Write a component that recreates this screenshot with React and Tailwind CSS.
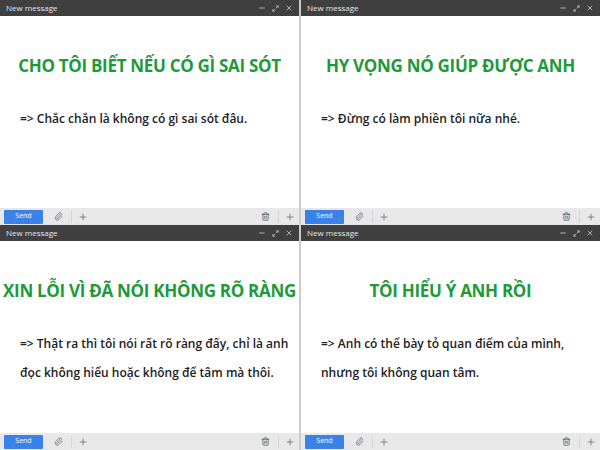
import { Paperclip, Plus, Trash2, Minus, Maximize2, X } from "lucide-react";

const panels = [
  { title: "CHO TÔI BIẾT NẾU CÓ GÌ SAI SÓT", text: "=> Chắc chắn là không có gì sai sót đâu." },
  { title: "HY VỌNG NÓ GIÚP ĐƯỢC ANH", text: "=> Đừng có làm phiền tôi nữa nhé." },
  { title: "XIN LỖI VÌ ĐÃ NÓI KHÔNG RÕ RÀNG", text: "=> Thật ra thì tôi nói rất rõ ràng đấy, chỉ là anh đọc không hiểu hoặc không để tâm mà thôi." },
  { title: "TÔI HIỂU Ý ANH RỒI", text: "=> Anh có thể bày tỏ quan điểm của mình, nhưng tôi không quan tâm." },
];

function Panel({ title, text }) {
  return (
    <div className="flex flex-col h-[225px] bg-white">
      <div className="h-4 bg-[#404040] flex items-center justify-between px-1.5 text-[8px] text-gray-200">
        <span>New message</span>
        <span className="flex items-center gap-1.5">
          <Minus size={8} />
          <Maximize2 size={7} />
          <X size={8} />
        </span>
      </div>
      <div className="flex-1 flex flex-col pt-[37px]">
        <div className="text-center text-[17px] font-bold text-[#1e9a3a] whitespace-nowrap tracking-[-0.3px]">
          {title}
        </div>
        <div className="mt-[25px] pl-[20px] pr-[2px] text-[12px] font-semibold text-[#222] leading-[29px]">
          {text}
        </div>
      </div>
      <div className="h-[17px] bg-[#e8e8e8] flex items-center pl-1 pr-1 text-gray-500">
        <div className="w-[39px] h-[14px] bg-[#3b82e8] text-white text-[7px] flex items-center justify-center rounded-[1px]">Send</div>
        <Paperclip size={9} className="ml-[11px]" />
        <div className="w-px h-3 bg-gray-300 ml-[8px]" />
        <Plus size={10} className="ml-[6px]" />
        <div className="flex-1" />
        <Trash2 size={9} className="text-gray-600" />
        <div className="w-px h-3 bg-gray-300 ml-[8px]" />
        <Plus size={10} className="ml-[6px]" />
      </div>
    </div>
  );
}

export default function App() {
  return (
    <div className="w-[600px] h-[450px] grid grid-cols-2 gap-x-[2px] bg-[#ccc] overflow-hidden" style={{ fontFamily: '"Open Sans", "Noto Sans", sans-serif' }}>
      {panels.map((p, i) => (
        <Panel key={i} {...p} />
      ))}
    </div>
  );
}
